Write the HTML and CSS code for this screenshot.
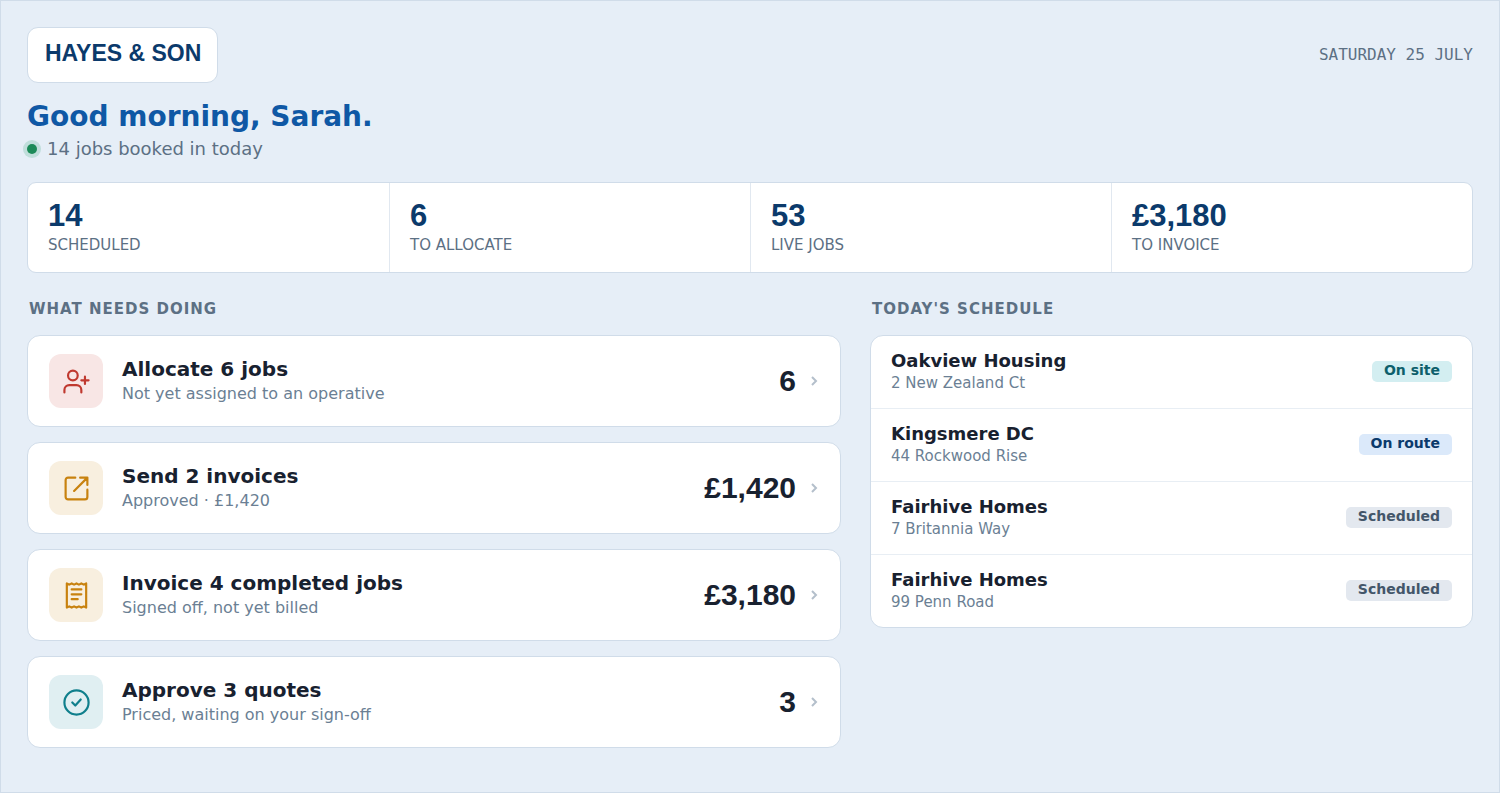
FILE: index.html
```html
<!DOCTYPE html>
<html lang="en-GB">
<head>
<meta charset="utf-8">
<title>Hayes &amp; Son – Dashboard</title>
<link rel="stylesheet" href="styles.css">
</head>
<body>
<main class="page">
  <header class="topbar">
    <div class="logo">HAYES &amp; SON</div>
    <time class="date" datetime="07-25">SATURDAY 25 JULY</time>
  </header>

  <h1 class="greeting">Good morning, Sarah.</h1>
  <p class="status"><span class="status-dot"></span>14 jobs booked in today</p>

  <dl class="stats">
    <div class="stat"><dd class="stat-value">14</dd><dt class="stat-label">SCHEDULED</dt></div>
    <div class="stat"><dd class="stat-value">6</dd><dt class="stat-label">TO ALLOCATE</dt></div>
    <div class="stat"><dd class="stat-value">53</dd><dt class="stat-label">LIVE JOBS</dt></div>
    <div class="stat"><dd class="stat-value">£3,180</dd><dt class="stat-label">TO INVOICE</dt></div>
  </dl>

  <div class="columns">
    <section>
      <h2 class="section-title">WHAT NEEDS DOING</h2>
      <div class="tasks">
        <a class="task" href="#allocate">
          <span class="task-icon red">
            <svg class="icon" viewBox="0 0 24 24" aria-hidden="true"><circle cx="9" cy="7" r="4"/><path d="M16 21v-2a4 4 0 0 0-4-4H6a4 4 0 0 0-4 4v2M19 8v6M22 11h-6"/></svg>
          </span>
          <span class="task-text"><span class="task-title">Allocate 6 jobs</span><span class="task-note">Not yet assigned to an operative</span></span>
          <span class="task-value">6</span>
          <svg class="chevron" viewBox="0 0 8 12" aria-hidden="true"><path d="m2 2 4 4-4 4"/></svg>
        </a>
        <a class="task" href="#send-invoices">
          <span class="task-icon amber">
            <svg class="icon" viewBox="0 0 24 24" aria-hidden="true"><path d="M21 13v6a2 2 0 0 1-2 2H5a2 2 0 0 1-2-2V5a2 2 0 0 1 2-2h6M15 3h6v6M10 14 21 3"/></svg>
          </span>
          <span class="task-text"><span class="task-title">Send 2 invoices</span><span class="task-note">Approved · £1,420</span></span>
          <span class="task-value">£1,420</span>
          <svg class="chevron" viewBox="0 0 8 12" aria-hidden="true"><path d="m2 2 4 4-4 4"/></svg>
        </a>
        <a class="task" href="#invoice-jobs">
          <span class="task-icon amber">
            <svg class="icon" viewBox="0 0 24 24" aria-hidden="true"><path d="M4 2v20l2-1 2 1 2-1 2 1 2-1 2 1 2-1 2 1V2l-2 1-2-1-2 1-2-1-2 1-2-1-2 1ZM8 7h8M8 11h8M8 15h5"/></svg>
          </span>
          <span class="task-text"><span class="task-title">Invoice 4 completed jobs</span><span class="task-note">Signed off, not yet billed</span></span>
          <span class="task-value">£3,180</span>
          <svg class="chevron" viewBox="0 0 8 12" aria-hidden="true"><path d="m2 2 4 4-4 4"/></svg>
        </a>
        <a class="task" href="#quotes">
          <span class="task-icon teal">
            <svg class="icon" viewBox="0 0 24 24" aria-hidden="true"><circle cx="12" cy="12" r="10"/><path d="m8.5 12 2.5 2.5 4.5-5"/></svg>
          </span>
          <span class="task-text"><span class="task-title">Approve 3 quotes</span><span class="task-note">Priced, waiting on your sign-off</span></span>
          <span class="task-value">3</span>
          <svg class="chevron" viewBox="0 0 8 12" aria-hidden="true"><path d="m2 2 4 4-4 4"/></svg>
        </a>
      </div>
    </section>

    <section>
      <h2 class="section-title">TODAY'S SCHEDULE</h2>
      <ul class="schedule">
        <li class="visit"><div><div class="visit-name">Oakview Housing</div><div class="visit-place">2 New Zealand Ct</div></div><span class="badge on-site">On site</span></li>
        <li class="visit"><div><div class="visit-name">Kingsmere DC</div><div class="visit-place">44 Rockwood Rise</div></div><span class="badge on-route">On route</span></li>
        <li class="visit"><div><div class="visit-name">Fairhive Homes</div><div class="visit-place">7 Britannia Way</div></div><span class="badge scheduled">Scheduled</span></li>
        <li class="visit"><div><div class="visit-name">Fairhive Homes</div><div class="visit-place">99 Penn Road</div></div><span class="badge scheduled">Scheduled</span></li>
      </ul>
    </section>
  </div>
</main>
</body>
</html>
```
FILE: styles.css
```css
* { box-sizing: border-box; }

body {
  margin: 0;
  background: #e6eef7;
  color: #18212f;
  font-family: "DejaVu Sans", sans-serif;
}

h1, h2, p, dl, dd, ul { margin: 0; padding: 0; }

.page {
  min-height: 100vh;
  padding: 26px;
  border: 1px solid #d0dce9;
}

.topbar {
  display: flex;
  justify-content: space-between;
  align-items: center;
}

.logo {
  padding: 12px 16px 16px 17px;
  background: #fff;
  border: 1px solid #d0dce9;
  border-radius: 11px;
  color: #0b3a6b;
  font: bold 23px/26px "Liberation Sans", Arial, sans-serif;
}

.date {
  color: #5c7084;
  font: 16px/20px "DejaVu Sans Mono", monospace;
}

.greeting {
  margin-top: 17px;
  color: #0f58a5;
  font-size: 28px;
  line-height: 34px;
}

.status {
  display: flex;
  align-items: center;
  gap: 10px;
  margin-top: 3px;
  color: #5c7084;
  font-size: 18px;
  line-height: 24px;
}

.status-dot {
  width: 10px;
  height: 10px;
  border-radius: 50%;
  background: #1b8a58;
  box-shadow: 0 0 0 4px #c0dedb;
}

.stats {
  display: grid;
  grid-template-columns: repeat(4, 1fr);
  margin-top: 21px;
  background: #fff;
  border: 1px solid #d0dce9;
  border-radius: 9px;
}

.stat {
  display: flex;
  flex-direction: column;
  padding: 16px 20px 18px;
}

.stat + .stat { border-left: 1px solid #e1e8f0; }

.stat-value {
  color: #0b3a6b;
  font: bold 31px/34px "Liberation Sans", Arial, sans-serif;
}

.stat-label {
  margin-top: 3px;
  color: #5c7084;
  font-size: 15px;
  line-height: 18px;
}

.columns {
  display: grid;
  grid-template-columns: 1.35fr 1fr;
  gap: 29px;
  align-items: start;
  margin-top: 26px;
}

.section-title {
  padding-left: 2px;
  margin-bottom: 16px;
  color: #5c7084;
  font-size: 15px;
  line-height: 20px;
  letter-spacing: 1px;
}

.tasks {
  display: flex;
  flex-direction: column;
  gap: 15px;
}

.task {
  display: flex;
  align-items: center;
  padding: 18px 21px;
  background: #fff;
  border: 1px solid #d0dce9;
  border-radius: 13px;
  color: inherit;
  text-decoration: none;
}

.task-icon {
  display: grid;
  place-items: center;
  width: 54px;
  height: 54px;
  border-radius: 12px;
}

.red { background: #f8e6e5; color: #c0392f; }
.amber { background: #f8efdf; color: #c8820f; }
.teal { background: #e0eff2; color: #0f7f8c; }

.icon {
  width: 29px;
  height: 29px;
  fill: none;
  stroke: currentColor;
  stroke-width: 1.8;
  stroke-linecap: round;
  stroke-linejoin: round;
}

.task-text {
  display: flex;
  flex: 1;
  flex-direction: column;
  gap: 2px;
  margin-left: 19px;
}

.task-title {
  font-size: 20px;
  font-weight: bold;
  line-height: 24px;
}

.task-note {
  color: #6b7f94;
  font-size: 16px;
  line-height: 22px;
}

.task-value { font: bold 30px/34px "Liberation Sans", Arial, sans-serif; }

.chevron {
  width: 8px;
  height: 12px;
  margin: 0 1px 0 14px;
  fill: none;
  stroke: #b4bfcb;
  stroke-width: 2;
}

.schedule {
  background: #fff;
  border: 1px solid #d0dce9;
  border-radius: 13px;
  list-style: none;
}

.visit {
  display: flex;
  justify-content: space-between;
  align-items: center;
  padding: 13px 20px 15px;
}

.visit + .visit { border-top: 1px solid #e8eef4; }

.visit-name {
  font-size: 18px;
  font-weight: bold;
  line-height: 24px;
}

.visit-place {
  color: #6b7f94;
  font-size: 15px;
  line-height: 20px;
}

.badge {
  padding: 0 12px 3px;
  border-radius: 5px;
  font-size: 14px;
  font-weight: bold;
  line-height: 18px;
}

.on-site { background: #d3eef1; color: #0d5f6b; }
.on-route { background: #dbe9fa; color: #0b3a6b; }
.scheduled { background: #e3e8ef; color: #43566a; }
```
